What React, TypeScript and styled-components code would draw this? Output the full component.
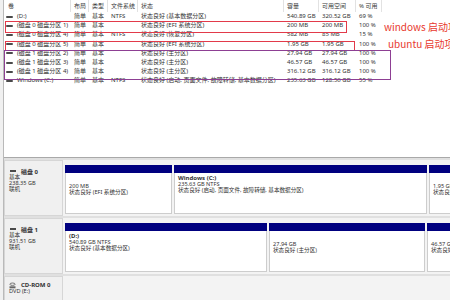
import React from "react";
import styled, { createGlobalStyle } from "styled-components";

const GlobalStyle = createGlobalStyle`
  html, body { margin: 0; padding: 0; background: #f0f0f0; }
  body { font-family: "Noto Sans", "Noto Sans CJK SC", sans-serif; }
  #root { width: 450px; height: 300px; overflow: hidden; }
`;

const Window = styled.div`
  width: 446px;
  height: 300px;
  margin-left: 3px;
  border-left: 1px solid #b9b9b9;
  overflow: hidden;
  display: flex;
  flex-direction: column;
  background: #e4e4e4;
  color: #333;
  font-size: 6px;
`;

const VolumePanel = styled.div`
  position: relative;
  flex: 0 0 157px;
  background: #fff;
  border-bottom: 1px solid #a9a9a9;
  overflow: hidden;
`;

const cols = "67px 18px 19px 30px 146px 35px 37px 26px 1fr";

const HeaderRow = styled.div`
  display: grid;
  grid-template-columns: ${cols};
  height: 12px;
  line-height: 12px;
  color: #3a3a3a;
`;

const HeaderCell = styled.div<{ $first?: boolean; $last?: boolean }>`
  padding-left: ${(p) => (p.$first ? 4 : 3)}px;
  border-right: ${(p) => (p.$last ? "none" : "1px solid #e2e2e2")};
  white-space: nowrap;
  overflow: hidden;
`;

const Row = styled.div`
  display: grid;
  grid-template-columns: ${cols};
  height: 9.2px;
  line-height: 9.2px;
`;

const Cell = styled.div`
  padding-left: 3px;
  white-space: nowrap;
`;

const NameCell = styled.div`
  display: flex;
  align-items: center;
  gap: 4px;
  padding-left: 2px;
  white-space: nowrap;
`;

const VolIcon = styled.span`
  display: inline-block;
  width: 7px;
  height: 2px;
  background: #4a4a4a;
  border-radius: 1px;
  flex: 0 0 auto;
`;

const AnnoBox = styled.div<{ $t: number; $l: number; $w: number; $h: number; $c: string }>`
  position: absolute;
  top: ${(p) => p.$t}px;
  left: ${(p) => p.$l}px;
  width: ${(p) => p.$w}px;
  height: ${(p) => p.$h}px;
  border: 1.5px solid ${(p) => p.$c};
  box-sizing: border-box;
  pointer-events: none;
`;

const AnnoText = styled.div<{ $t: number; $l: number }>`
  position: absolute;
  top: ${(p) => p.$t}px;
  left: ${(p) => p.$l}px;
  font-family: "Noto Sans CJK SC", sans-serif;
  font-size: 10px;
  line-height: 12px;
  color: #e8392e;
  white-space: nowrap;
`;

const DiskArea = styled.div`
  flex: 1;
  display: flex;
  flex-direction: column;
  gap: 2px;
  padding-top: 2px;
  background: #e0e0e0;
`;

const DiskRow = styled.div<{ $h?: number }>`
  display: flex;
  gap: 2px;
  flex: 0 0 ${(p) => (p.$h ? `${p.$h}px` : "auto")};
  background: #f3f3f3;
`;

const Label = styled.div`
  flex: 0 0 59px;
  box-sizing: border-box;
  border: 1px solid #d6d6d6;
  background: #f0f0f0;
  padding-left: 4px;
  color: #333;
  font-size: 5.6px;
`;

const LabelTitle = styled.div<{ $mt: number }>`
  display: flex;
  align-items: center;
  gap: 5px;
  margin-top: ${(p) => p.$mt}px;
  height: 8px;
  font-weight: 700;
  font-size: 6px;
  white-space: nowrap;
`;

const DiskIcon = styled.span`
  display: inline-block;
  width: 6px;
  height: 2px;
  margin-left: 1px;
  background: #4a4a4a;
`;

const LabelLine = styled.div`
  line-height: 5.8px;
  white-space: nowrap;
`;

const Partitions = styled.div`
  flex: 1;
  display: flex;
  gap: 2px;
  padding: 5px 0 2px 0;
  overflow: hidden;
`;

const Partition = styled.div<{ $w: number }>`
  flex: 0 0 ${(p) => p.$w}px;
  display: flex;
  flex-direction: column;
`;

const Band = styled.div`
  height: 8px;
  background: #00007f;
`;

const PartBody = styled.div<{ $pt: number }>`
  flex: 1;
  background: #fff;
  border: 1px solid #cdcdcd;
  border-top: none;
  padding: ${(p) => p.$pt}px 0 0 3px;
  font-size: 5.6px;
  line-height: 5.8px;
  white-space: nowrap;
  overflow: hidden;
`;

const PartName = styled.div`
  font-weight: 700;
  font-size: 6px;
`;

const volumes = [
  ["(D:)", "简单", "基本", "NTFS", "状态良好 (基本数据分区)", "540.89 GB", "320.52 GB", "69 %"],
  ["(磁盘 0 磁盘分区 1)", "简单", "基本", "", "状态良好 (EFI 系统分区)", "200 MB", "200 MB", "100 %"],
  ["(磁盘 0 磁盘分区 4)", "简单", "基本", "NTFS", "状态良好 (恢复分区)", "582 MB", "85 MB", "15 %"],
  ["(磁盘 0 磁盘分区 5)", "简单", "基本", "", "状态良好 (EFI 系统分区)", "1.95 GB", "1.95 GB", "100 %"],
  ["(磁盘 1 磁盘分区 2)", "简单", "基本", "", "状态良好 (主分区)", "27.94 GB", "27.94 GB", "100 %"],
  ["(磁盘 1 磁盘分区 3)", "简单", "基本", "", "状态良好 (主分区)", "46.57 GB", "46.57 GB", "100 %"],
  ["(磁盘 1 磁盘分区 4)", "简单", "基本", "", "状态良好 (主分区)", "316.12 GB", "316.12 GB", "100 %"],
  ["Windows (C:)", "简单", "基本", "NTFS", "状态良好 (启动, 页面文件, 故障转储, 基本数据分区)", "235.63 GB", "128.50 GB", "55 %"],
];

const headers = ["卷", "布局", "类型", "文件系统", "状态", "容量", "可用空间", "% 可用", ""];

type Part = { w: number; name?: string; size: string; status: string };

const disk0: Part[] = [
  { w: 107, size: "200 MB", status: "状态良好 (EFI 系统分区)" },
  { w: 253, name: "Windows  (C:)", size: "235.63 GB NTFS", status: "状态良好 (启动, 页面文件, 故障转储, 基本数据分区)" },
  { w: 100, size: "1.95 GB", status: "状态良好 (EFI 系统分区)" },
];

const disk1: Part[] = [
  { w: 202, name: "(D:)", size: "540.89 GB NTFS", status: "状态良好 (基本数据分区)" },
  { w: 156, size: "27.94 GB", status: "状态良好 (主分区)" },
  { w: 100, size: "46.57 GB", status: "状态良好 (主分区)" },
];

const CdIcon = () => (
  <svg width="7" height="7" viewBox="0 0 7 7">
    <ellipse cx="3.5" cy="2.2" rx="2.6" ry="1.2" fill="none" stroke="#555" strokeWidth="0.8" />
    <rect x="0.5" y="4.3" width="6" height="2" fill="#666" />
  </svg>
);

const PartList = ({ parts }: { parts: Part[] }) => (
  <Partitions>
    {parts.map((p, i) => (
      <Partition key={i} $w={p.w}>
        <Band />
        <PartBody $pt={p.name ? 3 : 11}>
          {p.name && <PartName>{p.name}</PartName>}
          <div>{p.size}</div>
          <div>{p.status}</div>
        </PartBody>
      </Partition>
    ))}
  </Partitions>
);

export default function App() {
  return (
    <>
      <GlobalStyle />
      <Window>
        <VolumePanel>
          <HeaderRow>
            {headers.map((h, i) => (
              <HeaderCell key={i} $first={i === 0} $last={i === headers.length - 1}>
                {h}
              </HeaderCell>
            ))}
          </HeaderRow>
          {volumes.map((v, i) => (
            <Row key={i}>
              <NameCell>
                <VolIcon />
                {v[0]}
              </NameCell>
              {v.slice(1).map((c, j) => (
                <Cell key={j}>{c}</Cell>
              ))}
            </Row>
          ))}
          <AnnoBox $t={21} $l={1} $w={342} $h={11.5} $c="#e23a4a" />
          <AnnoBox $t={40.5} $l={1} $w={350} $h={10} $c="#e23a4a" />
          <AnnoBox $t={50} $l={0} $w={387} $h={29.5} $c="#8d3f93" />
          <AnnoText $t={20.5} $l={380}>windows 启动项</AnnoText>
          <AnnoText $t={38} $l={384}>ubuntu 启动项</AnnoText>
        </VolumePanel>
        <DiskArea>
          <DiskRow $h={56}>
            <Label>
              <LabelTitle $mt={6}>
                <DiskIcon />
                磁盘 0
              </LabelTitle>
              <LabelLine>基本</LabelLine>
              <LabelLine>238.35 GB</LabelLine>
              <LabelLine>联机</LabelLine>
            </Label>
            <PartList parts={disk0} />
          </DiskRow>
          <DiskRow $h={56}>
            <Label>
              <LabelTitle $mt={6}>
                <DiskIcon />
                磁盘 1
              </LabelTitle>
              <LabelLine>基本</LabelLine>
              <LabelLine>931.51 GB</LabelLine>
              <LabelLine>联机</LabelLine>
            </Label>
            <PartList parts={disk1} />
          </DiskRow>
          <DiskRow $h={40}>
            <Label>
              <LabelTitle $mt={4}>
                <CdIcon />
                CD-ROM 0
              </LabelTitle>
              <LabelLine>DVD (E:)</LabelLine>
            </Label>
          </DiskRow>
        </DiskArea>
      </Window>
    </>
  );
}
